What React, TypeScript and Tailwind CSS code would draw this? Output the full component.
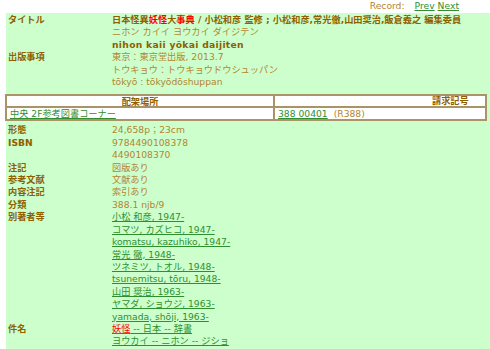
import React from 'react';

const LABEL = 'text-[#8f5f00] font-bold';
const VALUE = 'text-[#b58431]';
const LINK = 'text-[#2f8f2f] underline';

const Row = ({ label, children }: { label?: string; children: React.ReactNode }) => (
  <div className="flex">
    <div className={`w-[104px] shrink-0 ${LABEL}`}>{label}</div>
    <div className="flex-1">{children}</div>
  </div>
);

const authors = [
  '小松 和彦, 1947-',
  'コマツ, カズヒコ, 1947-',
  'komatsu, kazuhiko, 1947-',
  '常光 徹, 1948-',
  'ツネミツ, トオル, 1948-',
  'tsunemitsu, tōru, 1948-',
  '山田 奨治, 1963-',
  'ヤマダ, ショウジ, 1963-',
  'yamada, shōji, 1963-',
];

export default function App() {
  return (
    <div
      className="w-[490px] h-[349px] overflow-hidden bg-white text-[9.2px] leading-[12.4px]"
      style={{ fontFamily: '"DejaVu Sans", "Noto Sans CJK JP", sans-serif' }}
    >
      {/* record navigation */}
      <div className="h-[13px] flex justify-end items-center pr-[31px] gap-[3px] text-[#b58431]">
        <span className="mr-[7px]">Record:</span>
        <a className={LINK}>Prev</a>
        <a className={LINK}>Next</a>
      </div>

      <div className="ml-[6px] bg-[#ccffcc] pl-[2px] pt-[1px] h-full">
        <Row label="タイトル">
          <div className={LABEL}>
            日本怪異<span className="text-[#ff0000]">妖怪</span>大<span className="text-[#ff0000]">事典</span> / 小松和彦 監修 ; 小松和彦,常光徹,山田奨治,飯倉義之 編集委員
          </div>
          <div className={VALUE}>ニホン カイイ ヨウカイ ダイジテン</div>
          <div className={`${LABEL} tracking-[0.3px]`}>nihon kaii yōkai daijiten</div>
        </Row>
        <Row label="出版事項">
          <div className={VALUE}>東京：東京堂出版, 2013.7</div>
          <div className={VALUE}>トウキョウ：トウキョウドウシュッパン</div>
          <div className={VALUE}>tōkyō : tōkyōdōshuppan</div>
        </Row>

        {/* holdings table */}
        <div className="-ml-[3px] mr-[3px] mt-[6px] mb-[3px] border-2 border-[#a89466] bg-white">
          <div className="flex border-b-2 border-[#a89466] h-[12px] items-center">
            <div className={`w-[268px] text-center border-r-2 border-[#a89466] h-full ${LABEL}`}>配架場所</div>
            <div className={`flex-1 pl-[157px] ${LABEL}`}>請求記号</div>
          </div>
          <div className="flex h-[11px] items-center">
            <div className="w-[268px] pl-[3px] border-r-2 border-[#a89466] h-full">
              <a className={LINK}>中央 2F参考図書コーナー</a>
            </div>
            <div className={`flex-1 pl-[3px] ${VALUE}`}>
              <a className={LINK}>388 00401</a>
              <span className="ml-[6px]">(R388)</span>
            </div>
          </div>
        </div>

        <Row label="形態"><div className={VALUE}>24,658p；23cm</div></Row>
        <Row label="ISBN">
          <div className={VALUE}>9784490108378</div>
          <div className={VALUE}>4490108370</div>
        </Row>
        <Row label="注記"><div className={VALUE}>図版あり</div></Row>
        <Row label="参考文献"><div className={VALUE}>文献あり</div></Row>
        <Row label="内容注記"><div className={VALUE}>索引あり</div></Row>
        <Row label="分類"><div className={VALUE}>388.1 njb/9</div></Row>
        <Row label="別著者等">
          {authors.map((a) => (
            <div key={a}><a className={LINK}>{a}</a></div>
          ))}
        </Row>
        <Row label="件名">
          <div>
            <a className={LINK}><span className="text-[#ff0000]">妖怪</span> -- 日本 -- 辞書</a>
          </div>
          <div><a className={LINK}>ヨウカイ -- ニホン -- ジショ</a></div>
        </Row>
      </div>
    </div>
  );
}
